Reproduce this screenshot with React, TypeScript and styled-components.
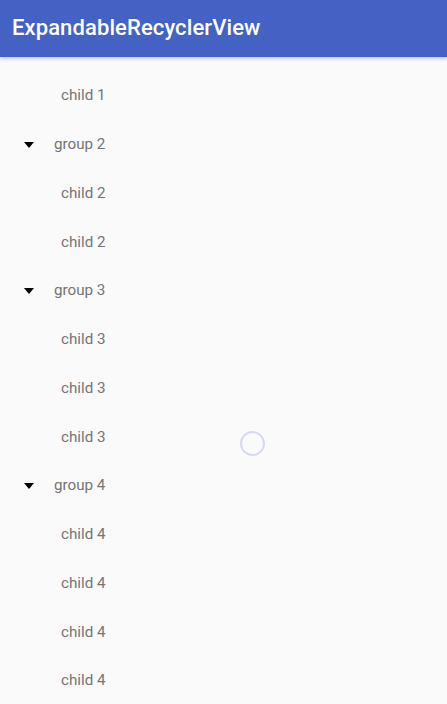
import React from 'react';
import styled, { createGlobalStyle } from 'styled-components';

const GlobalStyle = createGlobalStyle`
  html, body {
    margin: 0;
    padding: 0;
    background: #fafafa;
    font-family: Roboto, 'Noto Sans', sans-serif;
  }
`;

const Screen = styled.div`
  position: relative;
  width: 447px;
  height: 704px;
  overflow: hidden;
  background: #fafafa;
`;

const AppBar = styled.header`
  position: relative;
  z-index: 1;
  height: 57px;
  display: flex;
  align-items: center;
  padding: 0 12px;
  background: #4462c4;
  box-shadow: 0 1px 4px rgba(0, 0, 0, 0.3);
`;

const Title = styled.h1`
  margin: 0 0 2px;
  color: #fff;
  font-size: 22px;
  font-weight: 500;
  letter-spacing: 0.1px;
`;

const List = styled.div`
  display: flex;
  flex-direction: column;
  padding-top: 14px;
`;

const Row = styled.div<{ $group?: boolean }>`
  height: 48.75px;
  display: flex;
  align-items: center;
  padding-left: ${({ $group }) => ($group ? '24px' : '61px')};
  color: #757575;
  font-size: 15.2px;
`;

const Arrow = styled.span`
  width: 0;
  height: 0;
  border-left: 5.5px solid transparent;
  border-right: 5.5px solid transparent;
  border-top: 6px solid #000;
  margin-right: 20px;
  margin-top: 1px;
`;

const Spinner = styled.div`
  position: absolute;
  left: 240px;
  top: 431px;
  width: 21px;
  height: 21px;
  border: 2px solid #d3d9f1;
  border-radius: 50%;
`;

type Item = { label: string; group?: boolean };

const items: Item[] = [
  { label: 'child 1' },
  { label: 'group 2', group: true },
  { label: 'child 2' },
  { label: 'child 2' },
  { label: 'group 3', group: true },
  { label: 'child 3' },
  { label: 'child 3' },
  { label: 'child 3' },
  { label: 'group 4', group: true },
  { label: 'child 4' },
  { label: 'child 4' },
  { label: 'child 4' },
  { label: 'child 4' },
];

const App: React.FC = () => {
  return (
    <>
      <GlobalStyle />
      <Screen>
        <AppBar>
          <Title>ExpandableRecyclerView</Title>
        </AppBar>
        <List>
          {items.map((item, i) => (
            <Row key={i} $group={item.group}>
              {item.group && <Arrow />}
              {item.label}
            </Row>
          ))}
        </List>
        <Spinner />
      </Screen>
    </>
  );
};

export default App;
